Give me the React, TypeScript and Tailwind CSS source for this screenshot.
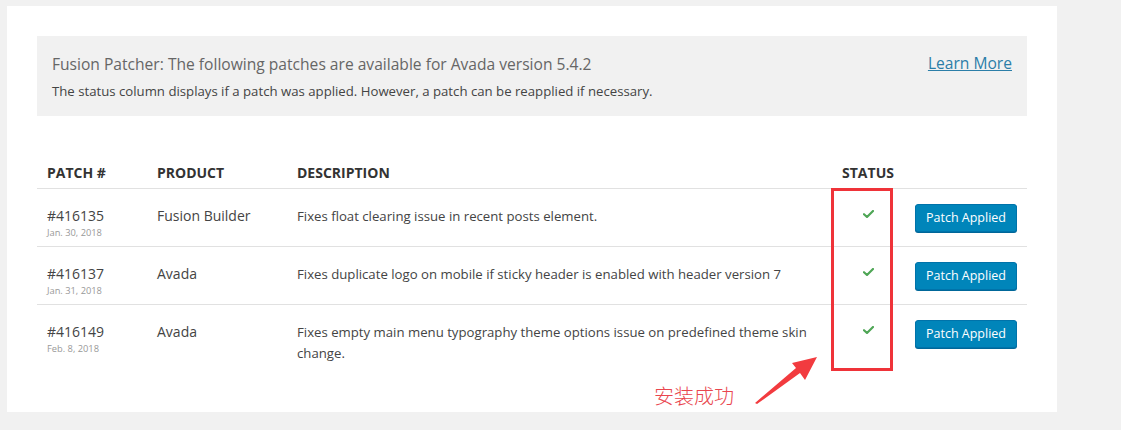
import React from 'react';

type Patch = {
  id: string;
  date: string;
  product: string;
  description: string;
};

const patches: Patch[] = [
  {
    id: '#416135',
    date: 'Jan. 30, 2018',
    product: 'Fusion Builder',
    description: 'Fixes float clearing issue in recent posts element.',
  },
  {
    id: '#416137',
    date: 'Jan. 31, 2018',
    product: 'Avada',
    description: 'Fixes duplicate logo on mobile if sticky header is enabled with header version 7',
  },
  {
    id: '#416149',
    date: 'Feb. 8, 2018',
    product: 'Avada',
    description:
      'Fixes empty main menu typography theme options issue on predefined theme skin change.',
  },
];

function Check() {
  return (
    <svg width="11" height="8" viewBox="0 0 11 8" className="mx-auto">
      <path d="M1 4.2 L4 7 L10 1" fill="none" stroke="#4fa656" strokeWidth="2.2" strokeLinecap="round" strokeLinejoin="round" />
    </svg>
  );
}

export default function App() {
  return (
    <div className="h-[430px] w-[1121px] bg-[#f1f1f1] pt-[6px] pl-[7px] font-['Open_Sans',_'Noto_Sans',sans-serif]">
      <div className="relative w-[1050px] bg-white px-[30px] pt-[30px] pb-[48px]">
        {/* Notice */}
        <div className="flex h-[80px] items-center justify-between bg-[#f1f1f1] px-[15px]">
          <div>
            <p className="text-[15.6px] leading-[22px] text-[#666]">
              Fusion Patcher: The following patches are available for Avada version 5.4.2
            </p>
            <p className="mt-[8px] text-[13.2px] leading-[16px] text-[#444]">
              The status column displays if a patch was applied. However, a patch can be reapplied if necessary.
            </p>
          </div>
          <a href="#" className="-mt-[24px] text-[15.6px] text-[#2b7ea8] underline">
            Learn More
          </a>
        </div>

        {/* Table */}
        <div className="mt-[40px] text-[#333]">
          <div className="flex h-[33px] items-center border-b border-[#e1e1e1] text-[14px] font-bold text-[#333]">
            <div className="w-[110px] px-[10px]">PATCH #</div>
            <div className="w-[140px] px-[10px]">PRODUCT</div>
            <div className="w-[544px] px-[10px]">DESCRIPTION</div>
            <div className="w-[74px] px-[4px] text-center">STATUS</div>
            <div className="flex-1" />
          </div>
          {patches.map((p, i) => (
            <div
              key={p.id}
              className={
                i < patches.length - 1
                  ? 'flex h-[58px] border-b border-[#e1e1e1] pt-[15px]'
                  : 'flex min-h-[58px] pt-[15px]'
              }
            >
              <div className="w-[110px] px-[10px] pt-[2px]">
                <div className="text-[14px] leading-[20px] text-[#444]">{p.id}</div>
                <div className="text-[9.3px] leading-[14px] text-[#999]">{p.date}</div>
              </div>
              <div className="w-[140px] px-[10px] pt-[2px] text-[14px] leading-[20px] text-[#444]">{p.product}</div>
              <div className="w-[544px] px-[10px] pt-[2px] text-[13.2px] leading-[21px] text-[#444]">{p.description}</div>
              <div className="w-[74px] pt-[6px]">
                <Check />
              </div>
              <div className="flex-1 px-[10px]">
                <button className="h-[28px] w-[102px] rounded-[3px] border border-[#0073aa] bg-[#0085ba] text-[12.5px] text-white shadow-[0_1px_0_#006799]">
                  Patch Applied
                </button>
              </div>
            </div>
          ))}
        </div>

        {/* Annotation */}
        <div className="pointer-events-none absolute left-[824px] top-[182px] h-[183px] w-[62px] border-[3px] border-[#ef3339]" />
        <svg className="pointer-events-none absolute left-[733px] top-[339px]" width="90" height="70" viewBox="740 345 90 70">
          <polygon points="755,403 796,368 792,363 817,357 805,380 800,373 757,404" fill="#f23b3f" />
        </svg>
        <div className="pointer-events-none absolute left-[647px] top-[377px] text-[20px] font-light leading-[26px] text-[#e9464e] font-['Noto_Sans_CJK_SC',sans-serif]">
          安装成功
        </div>
      </div>
    </div>
  );
}
